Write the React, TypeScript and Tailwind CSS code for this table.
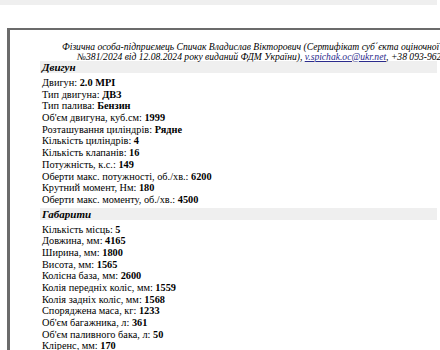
const engine = [
  ["Двигун", "2.0 MPI"],
  ["Тип двигуна", "ДВЗ"],
  ["Тип палива", "Бензин"],
  ["Об'єм двигуна, куб.см", "1999"],
  ["Розташування циліндрів", "Рядне"],
  ["Кількість циліндрів", "4"],
  ["Кількість клапанів", "16"],
  ["Потужність, к.с.", "149"],
  ["Оберти макс. потужності, об./хв.", "6200"],
  ["Крутний момент, Нм", "180"],
  ["Оберти макс. моменту, об./хв.", "4500"],
];

const dims = [
  ["Кількість місць", "5"],
  ["Довжина, мм", "4165"],
  ["Ширина, мм", "1800"],
  ["Висота, мм", "1565"],
  ["Колісна база, мм", "2600"],
  ["Колія передніх коліс, мм", "1559"],
  ["Колія задніх коліс, мм", "1568"],
  ["Споряджена маса, кг", "1233"],
  ["Об'єм багажника, л", "361"],
  ["Об'єм паливного бака, л", "50"],
  ["Кліренс, мм", "170"],
];

const Section = ({ title, rows }: { title: string; rows: string[][] }) => (
  <div>
    <div className="ml-[30px] h-[12px] bg-[#efefef] pl-[2px] text-[11px] leading-[12px] font-bold italic">
      {title}
    </div>
    <div className="pl-[32px] pt-[4px] pb-[2px]">
      {rows.map(([k, v]) => (
        <div key={k} className="h-[11.7px] text-[10.3px] leading-[11.7px] whitespace-nowrap">
          {k}: <b>{v}</b>
        </div>
      ))}
    </div>
  </div>
);

export default function App() {
  return (
    <div className="w-[440px] h-[350px] overflow-hidden bg-white text-black font-['Liberation_Serif',serif]">
      <div className="h-[5px] w-[437px] bg-[#efefef]" />
      <div className="mt-[23px] ml-[7px] w-[460px] border-t-2 border-l-[3px] border-[#6b6b6b] pt-[12px]">
        <div className="text-[9.6px] italic leading-[9.5px] whitespace-nowrap">
          <div className="pl-[52px]">
            Фізична особа-підприємець Спичак Владислав Вікторович (Сертифікат суб΄єкта оціночної діяльності
          </div>
          <div className="pl-[67px]">
            №381/2024 від 12.08.2024 року виданий ФДМ України),{" "}
            <span className="text-[#2b2b8c] underline">v.spichak.oc@ukr.net</span>, +38 093-962-17-17
          </div>
        </div>
        <div className="w-[427px]">
          <Section title="Двигун" rows={engine} />
          <Section title="Габарити" rows={dims} />
        </div>
      </div>
    </div>
  );
}
